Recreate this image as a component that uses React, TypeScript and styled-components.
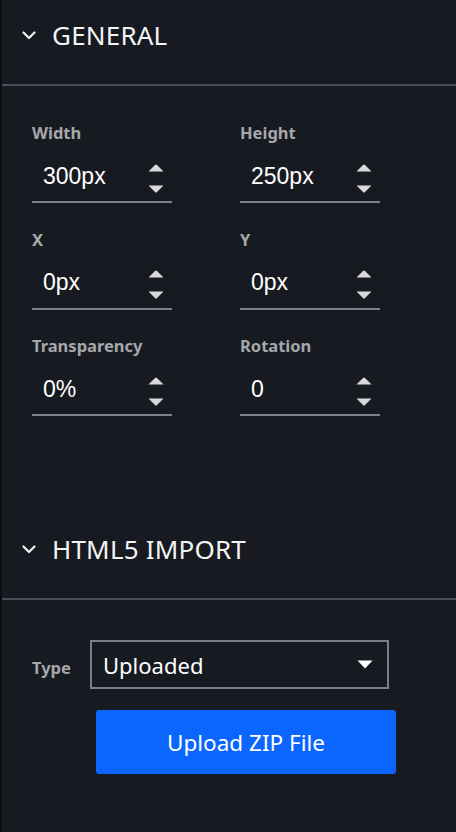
import React from 'react';
import styled, { createGlobalStyle } from 'styled-components';

const GlobalStyle = createGlobalStyle`
  html, body {
    margin: 0;
    padding: 0;
    background: #181a22;
  }
  * {
    box-sizing: border-box;
  }
`;

type FieldProps = {
  label: string;
  value: string;
};

const Chevron = () => (
  <svg width="14" height="9" viewBox="0 0 14 9" fill="none">
    <path d="M1.5 1.5 L7 7 L12.5 1.5" stroke="#f2f2f2" strokeWidth="2.2" strokeLinecap="round" strokeLinejoin="round" />
  </svg>
);

const Spinner = () => (
  <SpinnerBox>
    <svg width="16" height="8" viewBox="0 0 16 8">
      <path d="M0.5 7.5 L7 1 Q8 0 9 1 L15.5 7.5 Z" fill="#d9d9dc" />
    </svg>
    <svg width="16" height="8" viewBox="0 0 16 8">
      <path d="M0.5 0.5 L7 7 Q8 8 9 7 L15.5 0.5 Z" fill="#d9d9dc" />
    </svg>
  </SpinnerBox>
);

const Field = ({ label, value }: FieldProps) => (
  <FieldBox>
    <Label>{label}</Label>
    <ValueRow>
      <Value>{value}</Value>
      <Spinner />
    </ValueRow>
  </FieldBox>
);

const Section = ({ title, children }: { title: string; children: React.ReactNode }) => (
  <>
    <Header>
      <Chevron />
      <Title>{title}</Title>
    </Header>
    {children}
  </>
);

const App = () => {
  return (
    <Panel>
      <GlobalStyle />
      <Section title="GENERAL">
        <FieldsGrid>
          <Field label="Width" value="300px" />
          <Field label="Height" value="250px" />
          <Field label="X" value="0px" />
          <Field label="Y" value="0px" />
          <Field label="Transparency" value="0%" />
          <Field label="Rotation" value="0" />
        </FieldsGrid>
      </Section>
      <Section title="HTML5 IMPORT">
        <ImportBody>
          <TypeRow>
            <TypeLabel>Type</TypeLabel>
            <Select>
              <SelectText>Uploaded</SelectText>
              <svg width="16" height="9" viewBox="0 0 16 9">
                <path d="M0.5 0.5 L15.5 0.5 L8 8.5 Z" fill="#ffffff" />
              </svg>
            </Select>
          </TypeRow>
          <UploadButton>Upload ZIP File</UploadButton>
        </ImportBody>
      </Section>
    </Panel>
  );
};

const Panel = styled.div`
  width: 456px;
  min-height: 832px;
  background: #181a22;
  border-left: 2px solid #0c0d11;
  font-family: 'Noto Sans', 'Open Sans', sans-serif;
  color: #f2f2f2;
`;

const Header = styled.div`
  display: flex;
  align-items: center;
  gap: 16px;
  height: 86px;
  padding: 0 0 14px 20px;
  border-bottom: 2px solid #4a4c55;
`;

const Title = styled.span`
  font-size: 26px;
  letter-spacing: 0.2px;
  color: #f4f4f4;
`;

const FieldsGrid = styled.div`
  display: grid;
  grid-template-columns: 140px 140px;
  column-gap: 68px;
  row-gap: 26.5px;
  padding: 37px 0 98px 30px;
`;

const FieldBox = styled.div`
  display: flex;
  flex-direction: column;
`;

const Label = styled.span`
  font-size: 16.5px;
  font-weight: 700;
  line-height: 20px;
  color: #a6a7aa;
  margin-bottom: 16px;
`;

const ValueRow = styled.div`
  display: flex;
  align-items: center;
  justify-content: space-between;
  height: 44px;
  padding: 0 8px 8px 11px;
  border-bottom: 2px solid #7f818a;
`;

const Value = styled.span`
  font-family: 'Liberation Sans', Arial, sans-serif;
  font-size: 23px;
  color: #ffffff;
`;

const SpinnerBox = styled.div`
  display: flex;
  flex-direction: column;
  gap: 13px;
  margin-top: 4px;
`;

const ImportBody = styled.div`
  display: flex;
  flex-direction: column;
  padding: 40px 0 58px 0;
`;

const TypeRow = styled.div`
  display: flex;
  align-items: baseline;
  padding-left: 30px;
`;

const TypeLabel = styled.span`
  width: 58px;
  font-size: 16.5px;
  font-weight: 700;
  color: #a6a7aa;
`;

const Select = styled.div`
  display: flex;
  align-items: center;
  justify-content: space-between;
  width: 299px;
  height: 49px;
  padding: 0 14px 0 11px;
  border: 2px solid #7d7f88;
`;

const SelectText = styled.span`
  font-size: 22px;
  color: #ffffff;
`;

const UploadButton = styled.button`
  align-self: flex-start;
  margin: 21px 0 0 94px;
  width: 300px;
  height: 64px;
  border: none;
  border-radius: 3px;
  background: #0b66ff;
  color: #ffffff;
  font-family: 'Noto Sans', 'Open Sans', sans-serif;
  font-size: 22.5px;
  cursor: pointer;
`;

export default App;
